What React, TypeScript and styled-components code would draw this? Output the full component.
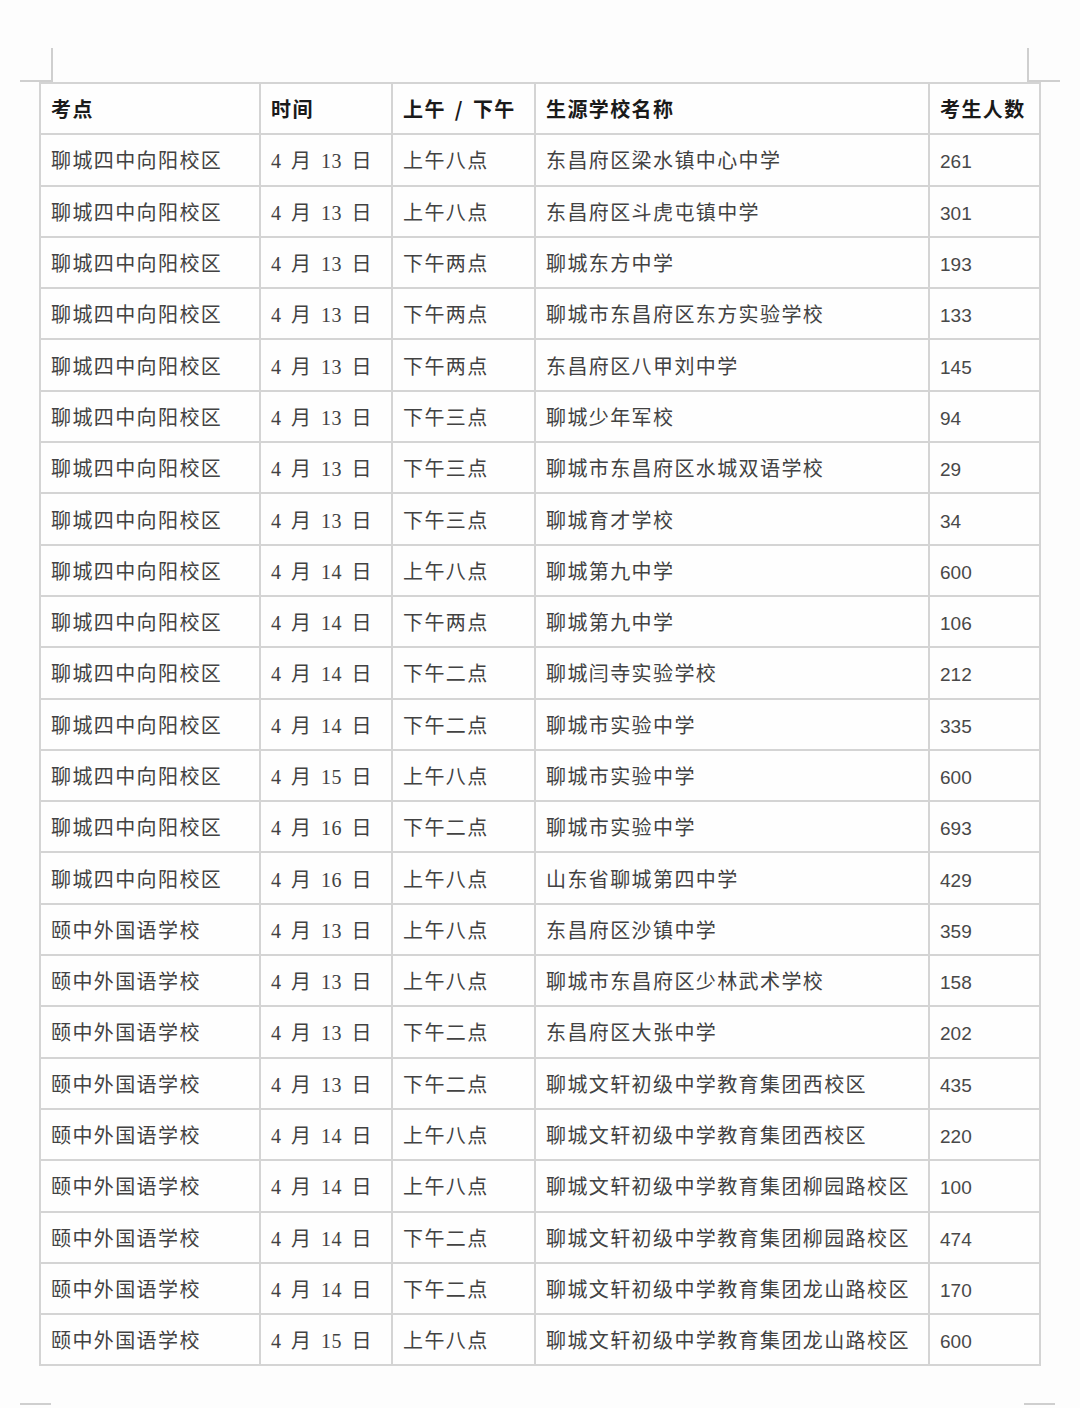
import React from "react";
import styled, { createGlobalStyle } from "styled-components";

type Row = {
  site: string;
  day: number;
  slot: string;
  school: string;
  count: number;
};

const A = "聊城四中向阳校区";
const B = "颐中外国语学校";

const rows: Row[] = [
  { site: A, day: 13, slot: "上午八点", school: "东昌府区梁水镇中心中学", count: 261 },
  { site: A, day: 13, slot: "上午八点", school: "东昌府区斗虎屯镇中学", count: 301 },
  { site: A, day: 13, slot: "下午两点", school: "聊城东方中学", count: 193 },
  { site: A, day: 13, slot: "下午两点", school: "聊城市东昌府区东方实验学校", count: 133 },
  { site: A, day: 13, slot: "下午两点", school: "东昌府区八甲刘中学", count: 145 },
  { site: A, day: 13, slot: "下午三点", school: "聊城少年军校", count: 94 },
  { site: A, day: 13, slot: "下午三点", school: "聊城市东昌府区水城双语学校", count: 29 },
  { site: A, day: 13, slot: "下午三点", school: "聊城育才学校", count: 34 },
  { site: A, day: 14, slot: "上午八点", school: "聊城第九中学", count: 600 },
  { site: A, day: 14, slot: "下午两点", school: "聊城第九中学", count: 106 },
  { site: A, day: 14, slot: "下午二点", school: "聊城闫寺实验学校", count: 212 },
  { site: A, day: 14, slot: "下午二点", school: "聊城市实验中学", count: 335 },
  { site: A, day: 15, slot: "上午八点", school: "聊城市实验中学", count: 600 },
  { site: A, day: 16, slot: "下午二点", school: "聊城市实验中学", count: 693 },
  { site: A, day: 16, slot: "上午八点", school: "山东省聊城第四中学", count: 429 },
  { site: B, day: 13, slot: "上午八点", school: "东昌府区沙镇中学", count: 359 },
  { site: B, day: 13, slot: "上午八点", school: "聊城市东昌府区少林武术学校", count: 158 },
  { site: B, day: 13, slot: "下午二点", school: "东昌府区大张中学", count: 202 },
  { site: B, day: 13, slot: "下午二点", school: "聊城文轩初级中学教育集团西校区", count: 435 },
  { site: B, day: 14, slot: "上午八点", school: "聊城文轩初级中学教育集团西校区", count: 220 },
  { site: B, day: 14, slot: "上午八点", school: "聊城文轩初级中学教育集团柳园路校区", count: 100 },
  { site: B, day: 14, slot: "下午二点", school: "聊城文轩初级中学教育集团柳园路校区", count: 474 },
  { site: B, day: 14, slot: "下午二点", school: "聊城文轩初级中学教育集团龙山路校区", count: 170 },
  { site: B, day: 15, slot: "上午八点", school: "聊城文轩初级中学教育集团龙山路校区", count: 600 },
];

const GlobalStyle = createGlobalStyle`
  html, body {
    margin: 0;
    padding: 0;
    background: #fdfdfd;
  }
  body {
    font-family: "Noto Sans CJK SC", "Liberation Sans", sans-serif;
    color: #3c3c3c;
  }
`;

const Page = styled.div`
  width: 1080px;
  height: 1408px;
  overflow: hidden;
`;

const Marks = styled.div<{ $bottom?: boolean }>`
  display: flex;
  justify-content: space-between;
  align-items: ${({ $bottom }) => ($bottom ? "flex-start" : "flex-end")};
  height: ${({ $bottom }) => ($bottom ? "40px" : "82px")};
  padding: ${({ $bottom }) => ($bottom ? "37px 25px 0 20px" : "0 20px 0 20px")};
  box-sizing: border-box;
`;

const Corner = styled.div<{ $side: "left" | "right"; $bottom?: boolean }>`
  width: 31px;
  height: ${({ $bottom }) => ($bottom ? "3px" : "32px")};
  border-color: #cfcfcf;
  border-style: solid;
  border-width: 0;
  ${({ $bottom }) => ($bottom ? "border-top-width: 2px;" : "border-bottom-width: 2px;")}
  ${({ $side, $bottom }) =>
    $bottom ? "" : $side === "left" ? "border-right-width: 2px;" : "border-left-width: 2px;"}
`;

const TableWrap = styled.div`
  padding: 0 41px 0 39px;
`;

const Table = styled.table`
  width: 1000px;
  table-layout: fixed;
  border-collapse: collapse;
  background: #fefefe;
  border: 2px solid #d2d2d2;
`;

const Cell = styled.td<{ $head?: boolean; $serif?: boolean }>`
  height: 49.3px;
  padding: 0 0 0 10px;
  border: 2px solid #d4d4d4;
  font-size: 20px;
  letter-spacing: 1.4px;
  white-space: nowrap;
  overflow: hidden;
  text-align: left;
  vertical-align: middle;
  font-weight: ${({ $head }) => ($head ? 700 : 400)};
  color: ${({ $head }) => ($head ? "#1a1a1a" : "#424242")};
  font-family: ${({ $serif }) =>
    $serif
      ? `"Liberation Serif", "Noto Sans CJK SC", serif`
      : `"Noto Sans CJK SC", "Liberation Sans", sans-serif`};
`;

const Count = styled.span`
  font-family: "Liberation Sans", sans-serif;
  font-size: 19px;
  letter-spacing: 0;
  color: #484848;
`;

const DateText = styled.span`
  word-spacing: 4px;
  letter-spacing: 0.5px;
`;

const Slash = styled.span`
  padding: 0 9px;
`;

const widths = [220, 132, 143, 394, 111];

export default function App() {
  return (
    <Page>
      <GlobalStyle />
      <Marks>
        <Corner $side="left" />
        <Corner $side="right" />
      </Marks>
      <TableWrap>
        <Table>
          <colgroup>
            {widths.map((w, i) => (
              <col key={i} style={{ width: w }} />
            ))}
          </colgroup>
          <thead>
            <tr>
              <Cell as="th" $head>考点</Cell>
              <Cell as="th" $head>时间</Cell>
              <Cell as="th" $head>
                上午<Slash>/</Slash>下午
              </Cell>
              <Cell as="th" $head>生源学校名称</Cell>
              <Cell as="th" $head>考生人数</Cell>
            </tr>
          </thead>
          <tbody>
            {rows.map((r, i) => (
              <tr key={i}>
                <Cell>{r.site}</Cell>
                <Cell $serif>
                  <DateText>4 月 {r.day} 日</DateText>
                </Cell>
                <Cell>{r.slot}</Cell>
                <Cell>{r.school}</Cell>
                <Cell>
                  <Count>{r.count}</Count>
                </Cell>
              </tr>
            ))}
          </tbody>
        </Table>
      </TableWrap>
      <Marks $bottom>
        <Corner $side="left" $bottom />
        <Corner $side="right" $bottom />
      </Marks>
    </Page>
  );
}
